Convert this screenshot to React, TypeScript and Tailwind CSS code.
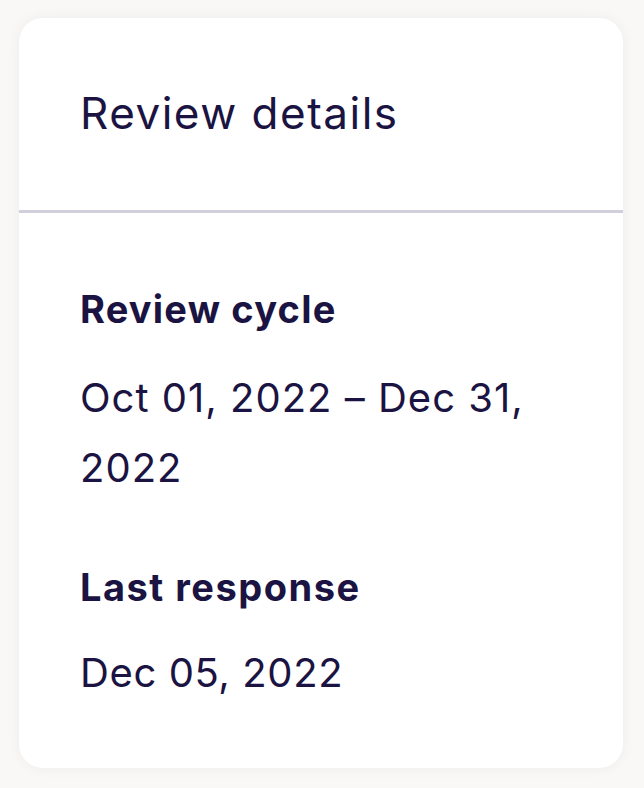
import React from 'react';

const App: React.FC = () => {
  return (
    <div className="min-h-screen bg-[#f9f8f7] p-[18px] pl-[19px] pr-[21px] font-['Inter',sans-serif] text-[#1b1442]">
      <div className="bg-white rounded-[24px] shadow-[0_0_14px_rgba(60,40,40,0.05)] overflow-hidden">
        {/* Header */}
        <div className="px-[61px] pt-[70px] pb-[72px] border-b-[3px] border-[#d1cfdc]">
          <h2 className="text-[44px] leading-[50px] font-normal tracking-[1.5px]">Review details</h2>
        </div>

        {/* Body */}
        <div className="px-[61px] pt-[76px] pb-[60px] flex flex-col gap-[64px]">
          <div className="flex flex-col gap-[34px]">
            <div className="text-[38px] leading-[40px] font-bold tracking-[1.2px]">Review cycle</div>
            <div className="text-[40px] leading-[70px] tracking-[1px]">Oct 01, 2022 – Dec 31, 2022</div>
          </div>
          <div className="flex flex-col gap-[31px]">
            <div className="text-[38px] leading-[40px] font-bold tracking-[1.5px]">Last response</div>
            <div className="text-[40px] leading-[70px] tracking-[0.6px]">Dec 05, 2022</div>
          </div>
        </div>
      </div>
    </div>
  );
};

export default App;
